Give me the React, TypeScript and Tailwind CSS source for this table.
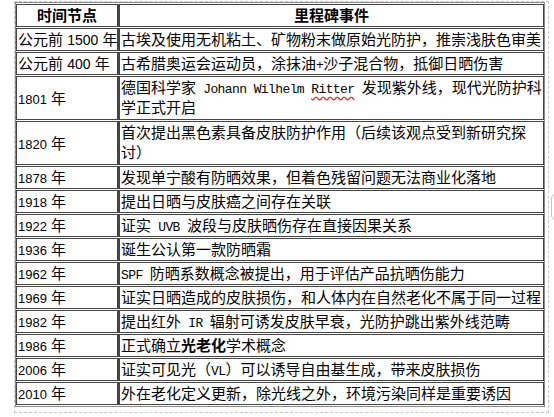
const cjk = { fontFamily: '"Liberation Sans", "Noto Sans CJK SC", sans-serif' };

function Y({ children, big }: { children: React.ReactNode; big?: boolean }) {
  return <span className={big ? "text-[14px] leading-none" : "text-[13px] leading-none"}>{children}</span>;
}

function L({ children }: { children: React.ReactNode }) {
  return (
    <span className="text-[13px] leading-none tracking-[-0.6px]" style={{ fontFamily: '"Liberation Mono", monospace' }}>
      {children}
    </span>
  );
}

type Row = {
  year: React.ReactNode;
  event: React.ReactNode;
  tall?: boolean;
};

const rows: Row[] = [
  {
    year: <>公元前 <Y big>1500</Y> 年</>,
    event: "古埃及使用无机粘土、矿物粉末做原始光防护，推崇浅肤色审美",
  },
  {
    year: <>公元前 <Y big>400</Y> 年</>,
    event: <>古希腊奥运会运动员，涂抹油<L>+</L>沙子混合物，抵御日晒伤害</>,
  },
  {
    year: <><Y>1801</Y> 年</>,
    event: (
      <>
        德国科学家<L> Johann Wilhelm </L>
        <L>
          <span className="underline decoration-wavy decoration-[#e03030] underline-offset-[3px]">Ritter</span>{" "}
        </L>
        发现紫外线，现代光防护科
        <br />
        学正式开启
      </>
    ),
    tall: true,
  },
  {
    year: <><Y>1820</Y> 年</>,
    event: (
      <>
        首次提出黑色素具备皮肤防护作用（后续该观点受到新研究探
        <br />
        讨）
      </>
    ),
    tall: true,
  },
  { year: <><Y>1878</Y> 年</>, event: "发现单宁酸有防晒效果，但着色残留问题无法商业化落地" },
  { year: <><Y>1918</Y> 年</>, event: "提出日晒与皮肤癌之间存在关联" },
  { year: <><Y>1922</Y> 年</>, event: <>证实<L> UVB </L>波段与皮肤晒伤存在直接因果关系</> },
  { year: <><Y>1936</Y> 年</>, event: "诞生公认第一款防晒霜" },
  { year: <><Y>1962</Y> 年</>, event: <><L>SPF </L>防晒系数概念被提出，用于评估产品抗晒伤能力</> },
  { year: <><Y>1969</Y> 年</>, event: "证实日晒造成的皮肤损伤，和人体内在自然老化不属于同一过程" },
  { year: <><Y>1982</Y> 年</>, event: <>提出红外<L> IR </L>辐射可诱发皮肤早衰，光防护跳出紫外线范畴</> },
  { year: <><Y>1986</Y> 年</>, event: <>正式确立<b className="font-bold">光老化</b>学术概念</> },
  { year: <><Y>2006</Y> 年</>, event: <>证实可见光（<L>VL</L>）可以诱导自由基生成，带来皮肤损伤</> },
  { year: <><Y>2010</Y> 年</>, event: "外在老化定义更新，除光线之外，环境污染同样是重要诱因" },
];

export default function App() {
  return (
    <div className="relative w-[554px] h-[417px] overflow-hidden bg-white text-black text-[15px]" style={cjk}>
      <div className="ml-[14px] mt-px w-[535px] border border-dashed border-[#c8c8c8] pb-[5px]">
        <table className="w-[530px] table-fixed border-separate border-spacing-x-0 border-spacing-y-px border border-[#8a8a8a]">
          <colgroup>
            <col className="w-[102px]" />
            <col className="w-[426px]" />
          </colgroup>
          <thead>
            <tr>
              <th className="h-[23px] border border-[#454545] p-0 text-center font-bold leading-[21px]">时间节点</th>
              <th className="h-[23px] border border-l-2 border-[#454545] p-0 text-center font-bold leading-[21px]">
                里程碑事件
              </th>
            </tr>
          </thead>
          <tbody>
            {rows.map((r, i) => (
              <tr key={i}>
                <td
                  className={`${r.tall ? "h-[44px]" : "h-[23px]"} border border-[#454545] p-0 pl-px align-middle whitespace-nowrap leading-[21px]`}
                >
                  {r.year}
                </td>
                <td
                  className={`${r.tall ? "h-[44px] leading-[20px]" : "h-[23px] leading-[21px]"} border border-l-2 border-[#454545] p-0 pl-px align-middle whitespace-nowrap`}
                >
                  {r.event}
                </td>
              </tr>
            ))}
          </tbody>
        </table>
      </div>
      <div className="absolute left-[551px] top-[193px] h-[28px] w-[20px] rounded-md border border-[#c4c4c4] bg-white" />
    </div>
  );
}
